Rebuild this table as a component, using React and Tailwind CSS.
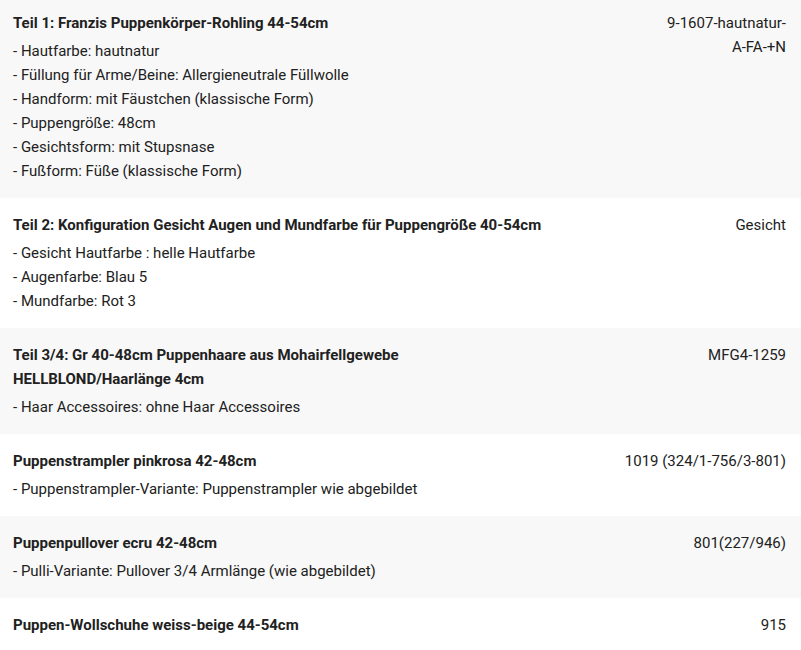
const rows = [
  {
    title: ['Teil 1: Franzis Puppenkörper-Rohling 44-54cm'],
    details: [
      'Hautfarbe: hautnatur',
      'Füllung für Arme/Beine: Allergieneutrale Füllwolle',
      'Handform: mit Fäustchen (klassische Form)',
      'Puppengröße: 48cm',
      'Gesichtsform: mit Stupsnase',
      'Fußform: Füße (klassische Form)',
    ],
    sku: ['9-1607-hautnatur-', 'A-FA-+N'],
    first: true,
  },
  {
    title: ['Teil 2: Konfiguration Gesicht Augen und Mundfarbe für Puppengröße 40-54cm'],
    details: ['Gesicht Hautfarbe : helle Hautfarbe', 'Augenfarbe: Blau 5', 'Mundfarbe: Rot 3'],
    sku: ['Gesicht'],
  },
  {
    title: ['Teil 3/4: Gr 40-48cm Puppenhaare aus Mohairfellgewebe', 'HELLBLOND/Haarlänge 4cm'],
    details: ['Haar Accessoires: ohne Haar Accessoires'],
    sku: ['MFG4-1259'],
  },
  {
    title: ['Puppenstrampler pinkrosa 42-48cm'],
    details: ['Puppenstrampler-Variante: Puppenstrampler wie abgebildet'],
    sku: ['1019 (324/1-756/3-801)'],
  },
  {
    title: ['Puppenpullover ecru 42-48cm'],
    details: ['Pulli-Variante: Pullover 3/4 Armlänge (wie abgebildet)'],
    sku: ['801(227/946)'],
  },
  {
    title: ['Puppen-Wollschuhe weiss-beige 44-54cm'],
    details: [],
    sku: ['915'],
  },
];

export default function App() {
  return (
    <div className="w-[801px] h-[650px] overflow-hidden bg-white font-['Roboto',sans-serif] text-[15px] leading-[24px] text-[#212121]">
      {rows.map((row, i) => (
        <div
          key={i}
          className={`flex justify-between gap-4 pl-[13px] pr-[15px] pb-[15px] ${row.first ? 'pt-[11px]' : 'pt-[15px]'} ${i % 2 === 0 ? 'bg-[#f8f8f8]' : 'bg-white'}`}
        >
          <div>
            <div className={`font-bold ${row.details.length ? 'mb-[4px]' : ''}`}>
              {row.title.map((t, j) => (
                <div key={j}>{t}</div>
              ))}
            </div>
            {row.details.map((d, j) => (
              <div key={j}>- {d}</div>
            ))}
          </div>
          <div className="text-right whitespace-nowrap">
            {row.sku.map((s, j) => (
              <div key={j}>{s}</div>
            ))}
          </div>
        </div>
      ))}
    </div>
  );
}
